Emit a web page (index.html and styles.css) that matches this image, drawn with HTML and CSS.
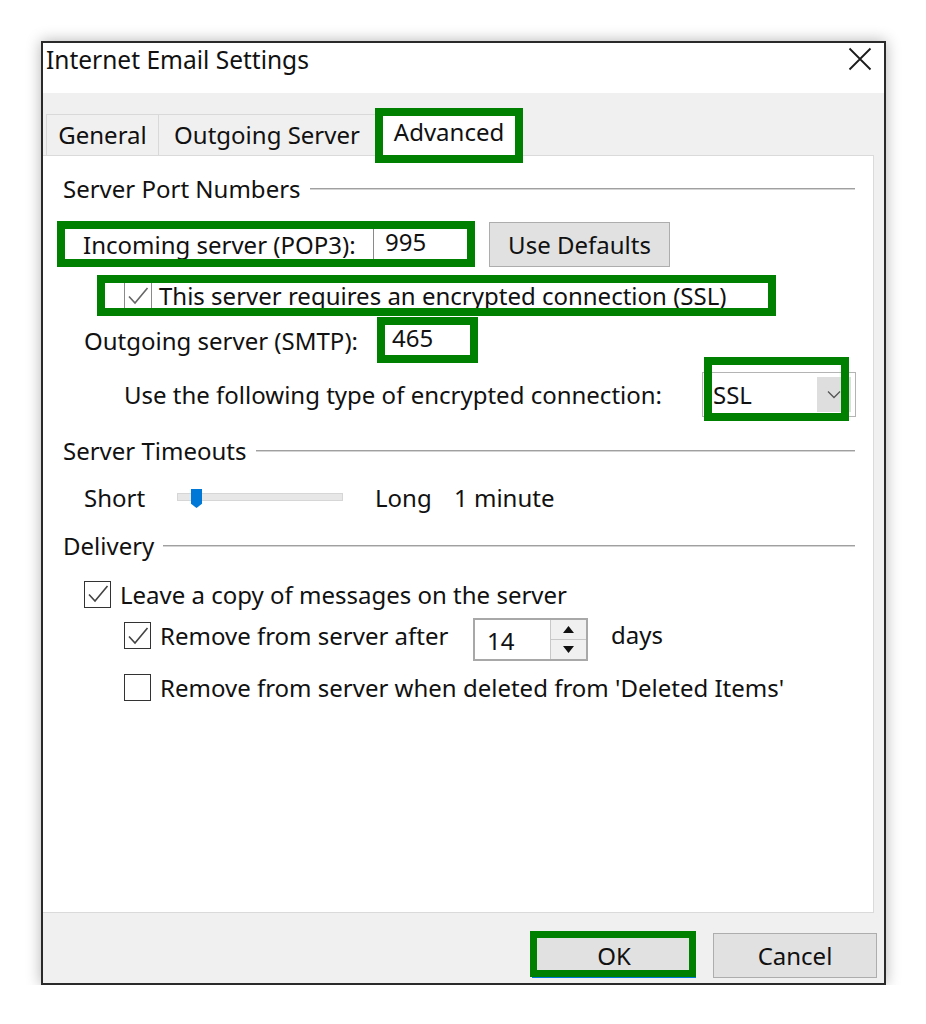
FILE: index.html
```html
<!DOCTYPE html>
<html lang="en">
<head>
  <meta charset="UTF-8" />
  <title>Internet Email Settings</title>
  <link rel="stylesheet" href="styles.css">
</head>
<body>
  <div class="dialog">
    <div class="titlebar">
      <span class="title">Internet Email Settings</span>
      <svg class="close" width="24" height="24" viewBox="0 0 24 24">
        <path d="M1.5 1.5L22.5 22.5M22.5 1.5L1.5 22.5" stroke="#1a1a1a" stroke-width="1.8" fill="none"/>
      </svg>
    </div>

    <div class="tabs">
      <div class="tab tab-general">General</div>
      <div class="tab tab-outgoing">Outgoing Server</div>
      <div class="tab tab-active">Advanced<span class="mark mark-tab"></span></div>
    </div>

    <div class="panel">
      <!-- Server Port Numbers -->
      <div class="group-title"><span>Server Port Numbers</span></div>

      <div class="row row-in">
        <span class="mark mark-in"></span>
        <span class="lbl lbl-in">Incoming server (POP3):</span>
        <div class="field field-in">995</div>
        <button class="btn btn-defaults">Use Defaults</button>
      </div>

      <div class="row row-ssl">
        <span class="mark mark-ssl"></span>
        <span class="check check-light">
          <svg width="24" height="24" viewBox="0 0 24 24"><path d="M3 12.5L9 19L21.5 4" stroke="#666" stroke-width="1.6" fill="none"/></svg>
        </span>
        <span class="check-text check-text-ssl">This server requires an encrypted connection (SSL)</span>
      </div>

      <div class="row row-out">
        <span class="mark mark-out"></span>
        <span class="lbl lbl-out">Outgoing server (SMTP):</span>
        <div class="field field-out">465</div>
      </div>

      <div class="row row-enc">
        <span class="lbl lbl-enc">Use the following type of encrypted connection:</span>
        <div class="combo">
          <span class="combo-value">SSL</span>
          <span class="combo-drop">
            <svg width="14" height="9" viewBox="0 0 14 9"><path d="M1 1.5L7 7.5L13 1.5" stroke="#555" stroke-width="1.3" fill="none"/></svg>
          </span>
          <span class="mark mark-enc"></span>
        </div>
      </div>

      <!-- Server Timeouts -->
      <div class="group-title group-timeouts"><span>Server Timeouts</span></div>

      <div class="row row-slider">
        <span class="lbl lbl-short">Short</span>
        <div class="track"><span class="thumb"></span></div>
        <span class="lbl lbl-long">Long</span>
        <span class="lbl">1 minute</span>
      </div>

      <!-- Delivery -->
      <div class="group-title group-delivery"><span>Delivery</span></div>

      <div class="row row-leave">
        <span class="check">
          <svg width="24" height="24" viewBox="0 0 24 24"><path d="M3 12.5L9 19L21.5 4" stroke="#444" stroke-width="1.6" fill="none"/></svg>
        </span>
        <span class="check-text">Leave a copy of messages on the server</span>
      </div>

      <div class="row row-remove">
        <div class="check-wrap">
          <span class="check">
            <svg width="24" height="24" viewBox="0 0 24 24"><path d="M3 12.5L9 19L21.5 4" stroke="#444" stroke-width="1.6" fill="none"/></svg>
          </span>
          <span class="check-text check-text-remove">Remove from server after</span>
        </div>
        <div class="spinner">
          <span class="spinner-value">14</span>
          <span class="spin-buttons">
            <span class="spin-btn"><svg width="11" height="7" viewBox="0 0 11 7"><path d="M0 7L5.5 0L11 7Z" fill="#111"/></svg></span>
            <span class="spin-btn"><svg width="11" height="7" viewBox="0 0 11 7"><path d="M0 0L5.5 7L11 0Z" fill="#111"/></svg></span>
          </span>
        </div>
        <span class="lbl lbl-days">days</span>
      </div>

      <div class="row row-deleted">
        <span class="check"></span>
        <span class="check-text">Remove from server when deleted from 'Deleted Items'</span>
      </div>
    </div>

    <div class="footer">
      <button class="btn btn-ok">OK<span class="mark mark-ok"></span></button>
      <button class="btn btn-cancel">Cancel</button>
    </div>
  </div>
</body>
</html>
```

FILE: styles.css
```css
/* Windows style dialog */
body {
  margin: 0;
  padding: 0;
  background: #fff;
  font-family: "Noto Sans", "Open Sans", sans-serif;
  font-size: 24px;
  color: #111;
}

.dialog {
  margin: 41px 0 0 41px;
  width: 841px;
  height: 940px;
  border: 2px solid #2a2a2a;
  background: #f0f0f0;
  box-shadow: 0 0 14px rgba(0, 0, 0, 0.3);
  display: flex;
  flex-direction: column;
}

.titlebar {
  height: 50px;
  background: #fff;
  display: flex;
  justify-content: space-between;
  align-items: flex-start;
  padding: 1px 12px 0 3px;
  box-sizing: border-box;
}

.title {
  line-height: 32px;
  font-size: 24.5px;
}

.close {
  margin-top: 3px;
}

/* tabs */
.tabs {
  height: 62px;
  display: flex;
  align-items: flex-end;
  padding-left: 3px;
}

.tab {
  height: 41px;
  box-sizing: border-box;
  border: 1px solid #d9d9d9;
  border-bottom: none;
  background: #f0f0f0;
  line-height: 39px;
  text-align: center;
}

.tab-general {
  width: 113px;
}

.tab-outgoing {
  width: 217px;
  border-left: none;
}

.tab-active {
  position: relative;
  width: 146px;
  height: 46px;
  margin-bottom: -1px;
  background: #fff;
  line-height: 42px;
  z-index: 1;
}

/* green annotation boxes */
.mark {
  position: absolute;
  border: 8px solid #008000;
  box-sizing: border-box;
  pointer-events: none;
}

.mark-tab {
  left: -2px;
  top: -3px;
  width: 148px;
  height: 55px;
}

.panel {
  height: 758px;
  width: 831px;
  box-sizing: border-box;
  background: #fff;
  border: 1px solid #dadada;
  border-left: none;
  padding-top: 18px;
  display: flex;
  flex-direction: column;
}

.group-title {
  height: 30px;
  display: flex;
  align-items: center;
  padding: 0 18px 0 20px;
  line-height: 30px;
}

.group-title::after {
  content: "";
  flex: 1;
  margin-left: 9px;
  border-top: 1px solid #a0a0a0;
  border-bottom: 1px solid #d4d4d4;
}

.group-timeouts {
  margin-top: 19px;
}

.group-delivery {
  margin-top: 19px;
}

.row {
  position: relative;
  display: flex;
  align-items: center;
}

.lbl {
  white-space: nowrap;
}

.field {
  box-sizing: border-box;
  height: 38px;
  border: 1px solid #8a8a8a;
  background: #fff;
  line-height: 34px;
  padding-left: 11px;
}

/* incoming row */
.row-in {
  margin-top: 17px;
  height: 46px;
  padding-left: 40px;
}

.lbl-in {
  width: 290px;
}

.field-in {
  width: 95px;
  height: 40px;
}

.mark-in {
  left: 14px;
  top: 0;
  width: 418px;
  height: 46px;
}

.btn {
  font-family: inherit;
  font-size: 24px;
  color: #111;
  background: #e1e1e1;
  border: 1px solid #adadad;
  box-sizing: border-box;
  padding: 0;
}

.btn-defaults {
  margin-left: 21px;
  width: 181px;
  height: 45px;
}

/* ssl row */
.row-ssl {
  margin-top: 8px;
  height: 41px;
  padding-left: 81px;
}

.mark-ssl {
  left: 54px;
  top: 0;
  width: 679px;
  height: 41px;
}

.check {
  width: 27px;
  height: 27px;
  box-sizing: border-box;
  border: 1px solid #333;
  background: #fff;
  display: flex;
  align-items: center;
  justify-content: center;
  flex-shrink: 0;
}

.check-light {
  width: 28px;
  height: 30px;
  border-color: #8a8a8a;
}

.check-text {
  margin-left: 9px;
  white-space: nowrap;
}

.check-text-ssl {
  margin-left: 7px;
}

/* outgoing row */
.row-out {
  margin-top: 1px;
  height: 46px;
  padding-left: 41px;
}

.lbl-out {
  width: 296px;
}

.field-out {
  width: 93px;
  height: 40px;
}

.mark-out {
  left: 334px;
  top: 0;
  width: 101px;
  height: 46px;
}

/* encryption row */
.row-enc {
  margin-top: 9px;
  height: 45px;
  padding-left: 81px;
}

.lbl-enc {
  width: 578px;
}

.combo {
  position: relative;
  width: 154px;
  height: 45px;
  box-sizing: border-box;
  border: 1px solid #b4b4b4;
  background: #fff;
  display: flex;
  align-items: center;
  justify-content: space-between;
}

.combo-value {
  padding-left: 10px;
}

.combo-drop {
  width: 34px;
  height: 35px;
  margin-right: 4px;
  background: #dedede;
  display: flex;
  align-items: center;
  justify-content: center;
}

.mark-enc {
  left: 1px;
  top: -16px;
  width: 145px;
  height: 64px;
}

/* slider row */
.row-slider {
  margin-top: 16px;
  height: 30px;
  padding-left: 41px;
}

.lbl-short {
  width: 93px;
}

.track {
  position: relative;
  width: 166px;
  height: 8px;
  box-sizing: border-box;
  background: #e7e7e7;
  border: 1px solid #d6d6d6;
}

.thumb {
  position: absolute;
  left: 13px;
  top: -5px;
  width: 11px;
  height: 19px;
  background: #0078d7;
  clip-path: polygon(0 0, 100% 0, 100% 78%, 50% 100%, 0 78%);
}

.lbl-long {
  margin-left: 32px;
  width: 79px;
}

/* delivery rows */
.row-leave {
  margin-top: 16px;
  height: 34px;
  padding-left: 41px;
}

.row-remove {
  margin-top: 7px;
  height: 43px;
  padding-left: 81px;
}

.check-wrap {
  display: flex;
  align-items: center;
  margin-top: -8px;
  width: 349px;
}

.spinner {
  width: 115px;
  height: 43px;
  box-sizing: border-box;
  border: 2px solid #a8a8a8;
  background: #fff;
  display: flex;
  justify-content: space-between;
}

.spinner-value {
  padding: 4px 0 0 12px;
}

.spin-buttons {
  width: 35px;
  display: flex;
  flex-direction: column;
  border-left: 1px solid #c8c8c8;
  background: #f0f0f0;
}

.spin-btn {
  flex: 1;
  display: flex;
  align-items: center;
  justify-content: center;
}

.spin-btn + .spin-btn {
  border-top: 1px solid #c8c8c8;
}

.lbl-days {
  margin-left: 23px;
  margin-top: -10px;
}

.row-deleted {
  margin-top: 9px;
  height: 34px;
  padding-left: 81px;
}

/* bottom buttons */
.footer {
  flex: 1;
  display: flex;
  justify-content: flex-end;
  align-items: flex-start;
  gap: 17px;
  padding: 20px 7px 0 0;
}

.btn-ok,
.btn-cancel {
  width: 164px;
  height: 45px;
}

.btn-ok {
  position: relative;
  border: 2px solid #0078d7;
}

.mark-ok {
  left: -4px;
  top: -4px;
  width: 166px;
  height: 46px;
  border-width: 7px;
}
```
